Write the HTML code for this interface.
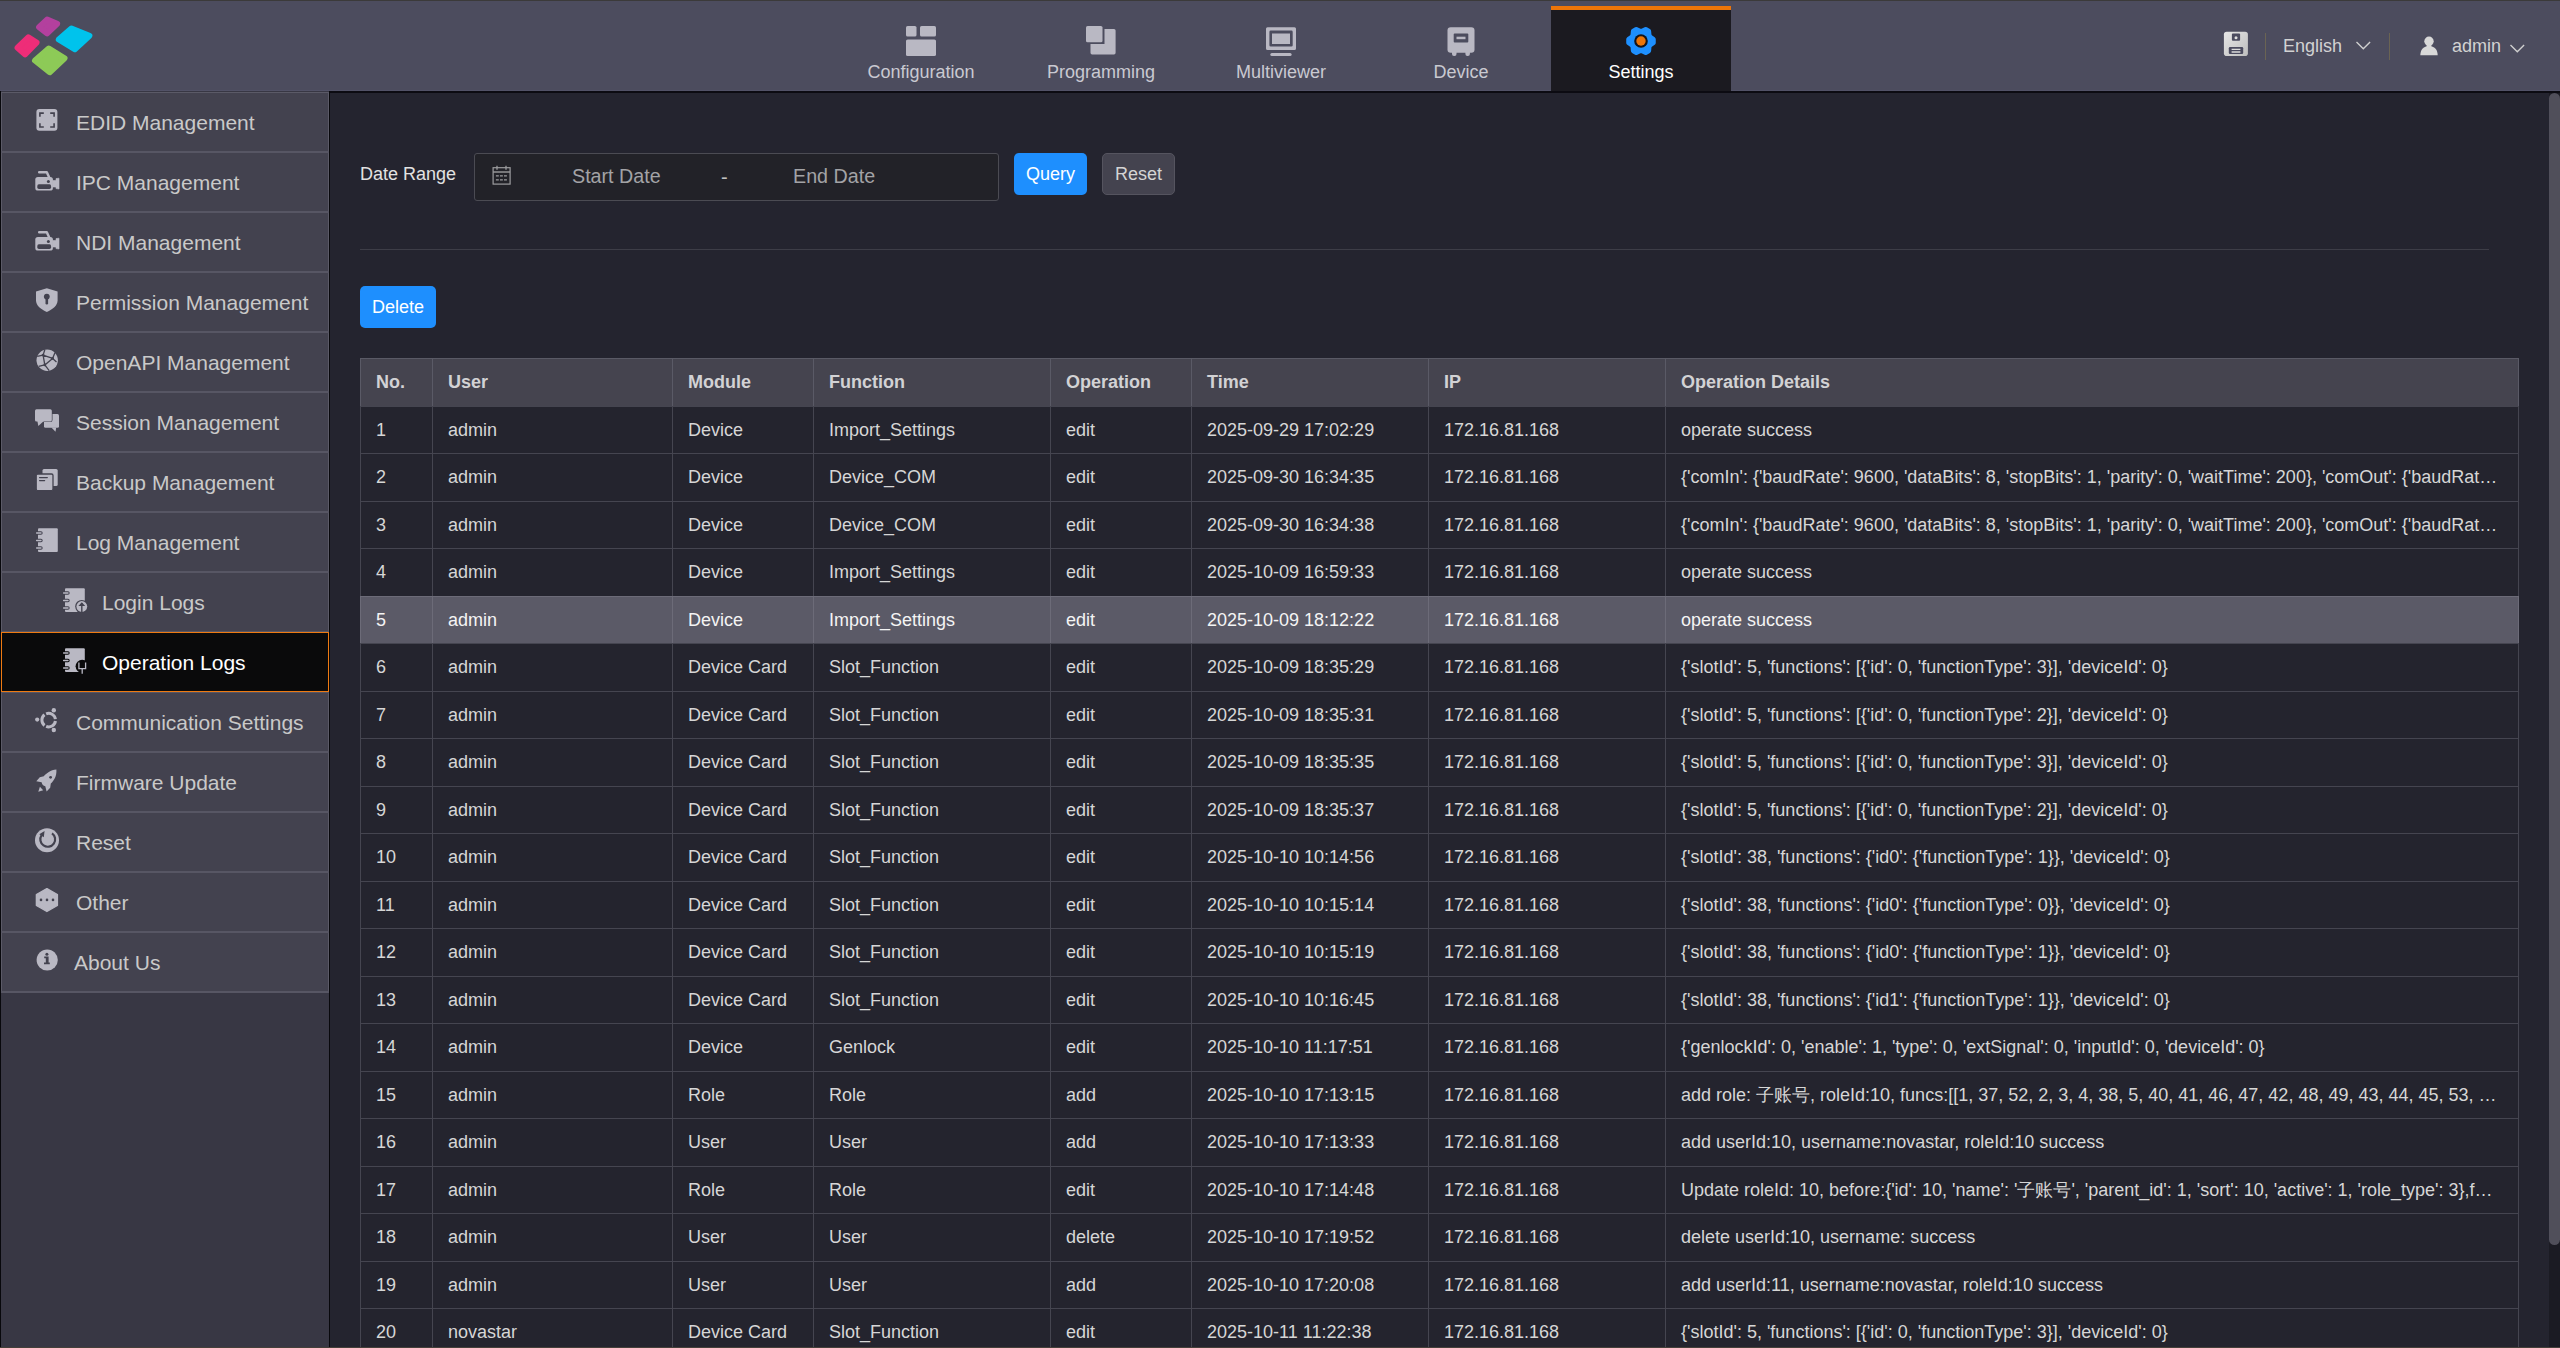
<!DOCTYPE html>
<html><head><meta charset="utf-8"><style>
*{box-sizing:border-box}
html,body{margin:0;padding:0}
body{width:2560px;height:1348px;overflow:hidden;position:relative;background:#24242f;font-family:'Liberation Sans', sans-serif;}
.abs{position:absolute}
#hdr{position:absolute;left:0;top:0;width:2560px;height:91px;background:#4c4c5e;border-top:1px solid #3b3a3a}
#hdrline{position:absolute;left:0;top:90px;width:2560px;height:1px;background:#525267}
#hdrblk{position:absolute;left:0;top:91px;width:2560px;height:2px;background:#0c0b12}
.tab{position:absolute;top:0;width:180px;height:91px;text-align:center;color:#c9c9d1;font-size:18px}
.tab .lbl{position:absolute;left:0;width:180px;top:62px;line-height:21px}
.tab svg{position:absolute;left:75px;top:24px}
#side{position:absolute;left:0;top:91px;width:330px;height:1257px;background:#383744;border-left:1px solid #08080c;border-right:1px solid #08080c}
.it{position:absolute;left:1px;width:328px;height:61px;color:#c9c9c9;font-size:21px}
.it .t{position:absolute;left:75px;top:19px;line-height:24px;white-space:nowrap}
.it svg{position:absolute}
.it.sub .t{left:101px}
.it.sel{color:#ffffff}
.cell{position:absolute;top:0;height:100%;border-left:1px solid #454550;padding-left:15px;white-space:nowrap;overflow:hidden;text-overflow:ellipsis;font-size:18px;color:#d6d6d6}
.row{position:absolute;left:0;width:2159px;border-top:1px solid #454550}
</style></head><body>

<div id="hdr"></div><div id="hdrline"></div><div id="hdrblk"></div>
<svg class="abs" style="left:0;top:8px" width="110" height="80" viewBox="0 8 110 80"><polygon points="39.1,27.2 47.1,19.6 57.1,23.8 47.1,33.4" fill="#b3409e" stroke="#b3409e" stroke-width="6" stroke-linejoin="round"/><polygon points="17.6,47.7 28.3,37.4 36.5,42.6 25.0,54.4" fill="#ee2d78" stroke="#ee2d78" stroke-width="6" stroke-linejoin="round"/><polygon points="58.8,39.5 71.4,28.5 89.4,35.7 74.8,49.3" fill="#00c3ec" stroke="#00c3ec" stroke-width="6" stroke-linejoin="round"/><polygon points="35.0,60.5 48.8,48.5 64.5,58.2 49.7,72.2" fill="#8dca57" stroke="#8dca57" stroke-width="6" stroke-linejoin="round"/></svg>
<div class="tab" style="left:831px"><svg width="32" height="34" viewBox="0 0 32 34"><rect x="0" y="2" width="10.5" height="10.5" rx="1.6" fill="#b9b8c3"/><rect x="14" y="2" width="16" height="10.5" rx="1.6" fill="#b9b8c3"/><rect x="0" y="15.5" width="30" height="16.5" rx="1.6" fill="#b9b8c3"/></svg><div class="lbl">Configuration</div></div>
<div class="tab" style="left:1011px"><svg width="32" height="34" viewBox="0 0 32 34"><path d="M4.5 5 h11 a1.5 1.5 0 0 1 1.5 1.5 V20 h-12 a1.5 1.5 0 0 1 -1.5 -1.5 Z" fill="none"/><rect x="0" y="2" width="16.5" height="16.3" rx="1.6" fill="#b9b8c3"/><path d="M18.5 5 h9.5 a1.6 1.6 0 0 1 1.6 1.6 V28.8 a1.6 1.6 0 0 1 -1.6 1.6 H6.1 a1.6 1.6 0 0 1 -1.6 -1.6 V20 h14 Z" fill="#b9b8c3"/></svg><div class="lbl">Programming</div></div>
<div class="tab" style="left:1191px"><svg width="32" height="34" viewBox="0 0 32 34"><path fill-rule="evenodd" d="M1.5 3.2 H28.5 A1.5 1.5 0 0 1 30 4.7 V24.6 A1.5 1.5 0 0 1 28.5 26.1 H1.5 A1.5 1.5 0 0 1 0 24.6 V4.7 A1.5 1.5 0 0 1 1.5 3.2 Z M4.7 6.6 H25.4 A1.3 1.3 0 0 1 26.7 7.9 V21.3 A1.3 1.3 0 0 1 25.4 22.6 H4.7 A1.3 1.3 0 0 1 3.4 21.3 V7.9 A1.3 1.3 0 0 1 4.7 6.6 Z" fill="#b9b8c3"/><rect x="6" y="9.5" width="18" height="10.5" fill="#b9b8c3"/><rect x="4.3" y="29" width="21.3" height="3.1" rx="1.5" fill="#b9b8c3"/></svg><div class="lbl">Multiviewer</div></div>
<div class="tab" style="left:1371px"><svg width="32" height="34" viewBox="0 0 32 34"><rect x="1.5" y="3.3" width="27" height="25.4" rx="3.2" fill="#b9b8c3"/><rect x="7.7" y="9.4" width="14.6" height="9" rx="1" fill="#4c4c5e"/><rect x="10.5" y="12.7" width="9" height="2.5" fill="#b9b8c3"/><rect x="6" y="26" width="4.5" height="6" rx="2" fill="#b9b8c3"/><rect x="19.4" y="26" width="4.5" height="6" rx="2" fill="#b9b8c3"/></svg><div class="lbl">Device</div></div>
<div class="tab" style="left:1551px;top:6px;height:85px;background:#1b1a20;border-top:4px solid #ec7508"></div>
<svg class="abs" style="left:1621px;top:21px" width="40" height="40" viewBox="0 0 40 40"><polygon points="32.28,18.27 32.28,21.73 29.04,24.03 28.01,25.82 27.63,29.77 24.65,31.50 21.03,29.85 18.97,29.85 15.35,31.50 12.37,29.77 11.99,25.82 10.96,24.03 7.72,21.73 7.72,18.27 10.96,15.97 11.99,14.18 12.37,10.23 15.35,8.50 18.97,10.15 21.03,10.15 24.65,8.50 27.63,10.23 28.01,14.18 29.04,15.97" fill="#1e90ff" stroke="#1e90ff" stroke-width="5" stroke-linejoin="round"/><circle cx="20" cy="20" r="6.8" fill="#15151a"/><circle cx="20" cy="20" r="4.7" fill="#ec7508"/></svg>
<div class="abs" style="left:1551px;top:62px;width:180px;text-align:center;color:#ffffff;font-size:18px;line-height:21px">Settings</div>
<svg class="abs" style="left:2223px;top:31px" width="26" height="26" viewBox="0 0 26 26"><defs><linearGradient id="fg" x1="0" y1="0" x2="1" y2="1"><stop offset="0" stop-color="#e6e6e6"/><stop offset="1" stop-color="#bebebe"/></linearGradient></defs><rect x="0.9" y="0.8" width="24" height="24.2" rx="2.8" fill="url(#fg)"/><rect x="8.9" y="2.5" width="8.2" height="7.3" rx="1" fill="#4b4b5f"/><circle cx="13" cy="6.8" r="1.5" fill="#e0e0e0"/><rect x="5.8" y="16" width="14.4" height="7" rx="1.2" fill="#4b4b5f"/><path d="M8.6 18.3 H17.4 M8.6 21 H17.4" stroke="#dcdcdc" stroke-width="1.3"/></svg>
<div class="abs" style="left:2265px;top:33px;width:1px;height:27px;background:#6a6453"></div>
<div class="abs" style="left:2389px;top:33px;width:1px;height:27px;background:#6a6453"></div>
<div class="abs" style="left:2283px;top:36px;color:#d2d2d2;font-size:18px;line-height:21px">English</div>
<svg class="abs" style="left:2355px;top:40px" width="17" height="11" viewBox="0 0 17 11"><path d="M1.5 2 L8.3 8.8 L15.1 2" fill="none" stroke="#cfcfcf" stroke-width="1.4"/></svg>
<svg class="abs" style="left:2419px;top:36px" width="20" height="22" viewBox="0 0 20 22"><circle cx="10" cy="5.2" r="4.7" fill="#d8d8d8"/><rect x="7.6" y="8" width="4.8" height="3" fill="#d8d8d8"/><path d="M1.3 19.2 C1.5 13.5 4.5 10 10 10 C15.5 10 18.5 13.5 18.7 19.2 Z" fill="#d8d8d8"/></svg>
<div class="abs" style="left:2452px;top:36px;color:#d2d2d2;font-size:18px;line-height:21px">admin</div>
<svg class="abs" style="left:2509px;top:43px" width="17" height="11" viewBox="0 0 17 11"><path d="M1.5 2 L8.3 8.8 L15.1 2" fill="none" stroke="#cfcfcf" stroke-width="1.4"/></svg>
<div id="side"></div>
<div class="abs" style="left:1px;top:92px;width:328px;height:901px;background:#43424f;border-left:1px solid #5b5a67;border-right:1px solid #5b5a67"></div>
<div class="abs" style="left:1px;top:92px;width:328px;height:1px;background:#5b5a67"></div>
<div class="abs" style="left:1px;top:151px;width:328px;height:2px;background:#575664"></div>
<div class="abs" style="left:1px;top:211px;width:328px;height:2px;background:#575664"></div>
<div class="abs" style="left:1px;top:271px;width:328px;height:2px;background:#575664"></div>
<div class="abs" style="left:1px;top:331px;width:328px;height:2px;background:#575664"></div>
<div class="abs" style="left:1px;top:391px;width:328px;height:2px;background:#575664"></div>
<div class="abs" style="left:1px;top:451px;width:328px;height:2px;background:#575664"></div>
<div class="abs" style="left:1px;top:511px;width:328px;height:2px;background:#575664"></div>
<div class="abs" style="left:1px;top:571px;width:328px;height:2px;background:#575664"></div>
<div class="abs" style="left:1px;top:631px;width:328px;height:2px;background:#575664"></div>
<div class="abs" style="left:1px;top:691px;width:328px;height:2px;background:#575664"></div>
<div class="abs" style="left:1px;top:751px;width:328px;height:2px;background:#575664"></div>
<div class="abs" style="left:1px;top:811px;width:328px;height:2px;background:#575664"></div>
<div class="abs" style="left:1px;top:871px;width:328px;height:2px;background:#575664"></div>
<div class="abs" style="left:1px;top:931px;width:328px;height:2px;background:#575664"></div>
<div class="abs" style="left:1px;top:991px;width:328px;height:2px;background:#575664"></div>
<div class="abs" style="left:1px;top:632px;width:328px;height:60px;background:#0a0a0b;border:1px solid #ee7a12"></div>
<div class="it" style="top:92px"><div class="t">EDID Management</div></div>
<div class="it" style="top:152px"><div class="t">IPC Management</div></div>
<div class="it" style="top:212px"><div class="t">NDI Management</div></div>
<div class="it" style="top:272px"><div class="t">Permission Management</div></div>
<div class="it" style="top:332px"><div class="t">OpenAPI Management</div></div>
<div class="it" style="top:392px"><div class="t">Session Management</div></div>
<div class="it" style="top:452px"><div class="t">Backup Management</div></div>
<div class="it" style="top:512px"><div class="t">Log Management</div></div>
<div class="it sub" style="top:572px"><div class="t">Login Logs</div></div>
<div class="it sub sel" style="top:632px"><div class="t">Operation Logs</div></div>
<div class="it" style="top:692px"><div class="t">Communication Settings</div></div>
<div class="it" style="top:752px"><div class="t">Firmware Update</div></div>
<div class="it" style="top:812px"><div class="t">Reset</div></div>
<div class="it" style="top:872px"><div class="t">Other</div></div>
<div class="it" style="top:932px"><div class="t" style="left:73px">About Us</div></div>
<svg class="abs" style="left:35px;top:108px" width="26" height="26" viewBox="0 0 26 26"><rect x="1.4" y="1" width="21" height="21.8" rx="3" fill="#b9b8c3"/><path d="M4.9 8.7V5.1H8.8 M15.2 5.1H19.1V8.7 M4.9 15.3V19H8.8 M15.2 19H19.1V15.3" fill="none" stroke="#43424f" stroke-width="1.6"/></svg>
<svg class="abs" style="left:35px;top:168px" width="26" height="26" viewBox="0 0 26 26"><path d="M4.2 4.3 H11.8 L14 9" fill="none" stroke="#b9b8c3" stroke-width="2.5" stroke-linejoin="round" stroke-linecap="round"/><rect x="0.3" y="9" width="17.6" height="13.6" rx="2.6" fill="#b9b8c3"/><rect x="2.3" y="16.3" width="13.8" height="4.6" rx="1.6" fill="#43424f"/><circle cx="13.4" cy="13.4" r="1.5" fill="#43424f"/><path d="M17.5 12.5 H21 V10.6 L24 10.2 V21 L21 20.6 V19 H17.5 Z" fill="#b9b8c3" stroke="#b9b8c3" stroke-width="0.6" stroke-linejoin="round"/></svg>
<svg class="abs" style="left:35px;top:228px" width="26" height="26" viewBox="0 0 26 26"><path d="M4.2 4.3 H11.8 L14 9" fill="none" stroke="#b9b8c3" stroke-width="2.5" stroke-linejoin="round" stroke-linecap="round"/><rect x="0.3" y="9" width="17.6" height="13.6" rx="2.6" fill="#b9b8c3"/><rect x="2.3" y="16.3" width="13.8" height="4.6" rx="1.6" fill="#43424f"/><circle cx="13.4" cy="13.4" r="1.5" fill="#43424f"/><path d="M17.5 12.5 H21 V10.6 L24 10.2 V21 L21 20.6 V19 H17.5 Z" fill="#b9b8c3" stroke="#b9b8c3" stroke-width="0.6" stroke-linejoin="round"/></svg>
<svg class="abs" style="left:35px;top:288px" width="26" height="26" viewBox="0 0 26 26"><path d="M11.8 0.3 L22.6 3.5 V12.5 C22.6 17.5 17.5 21.5 11.8 24 C6 21.5 1 17.5 1 12.5 V3.5 Z" fill="#b9b8c3"/><circle cx="11.8" cy="8.6" r="2.9" fill="#43424f"/><rect x="10.5" y="9" width="2.6" height="7.4" rx="1.2" fill="#43424f"/></svg>
<svg class="abs" style="left:35px;top:348px" width="26" height="26" viewBox="0 0 26 26"><circle cx="12.2" cy="12.2" r="10.7" fill="#b9b8c3"/><path d="M9.8 1.8 L8.1 7.1 L2.2 8.3 M8.1 7.1 L17.6 10.4 L19.9 4.8 M17.6 10.4 L21.5 14 M17.6 10.4 L9.8 16.9 L8.1 7.1 M9.8 16.9 L3.6 18.3 M9.8 16.9 L14.2 22.6" fill="none" stroke="#43424f" stroke-width="1.3" stroke-linejoin="round"/><circle cx="8.1" cy="7.1" r="1.4" fill="#43424f"/><circle cx="17.6" cy="10.4" r="1.4" fill="#43424f"/><circle cx="9.8" cy="16.9" r="1.4" fill="#43424f"/></svg>
<svg class="abs" style="left:35px;top:408px" width="26" height="26" viewBox="0 0 26 26"><rect x="9" y="6" width="15" height="13.7" rx="1.5" fill="#b9b8c3"/><path d="M16.4 19.5 L20.5 23.8 L21.2 19.5 Z" fill="#b9b8c3"/><rect x="0" y="1.2" width="16.8" height="12.2" rx="1.5" fill="#b9b8c3" stroke="#43424f" stroke-width="1.4"/><rect x="0" y="1.2" width="16.8" height="12.2" rx="1.5" fill="#b9b8c3"/><path d="M2.4 13 L3.3 17.9 L8.9 13 Z" fill="#b9b8c3"/></svg>
<svg class="abs" style="left:35px;top:468px" width="26" height="26" viewBox="0 0 26 26"><rect x="7.5" y="1" width="15.2" height="17" rx="1.5" fill="#b9b8c3"/><rect x="1.2" y="6" width="16.8" height="16.6" rx="1.5" fill="#b9b8c3" stroke="#43424f" stroke-width="1.3"/><path d="M4.6 9.6 H12.3 M4.6 12.6 H9.6" stroke="#43424f" stroke-width="1.3" stroke-linecap="round"/></svg>
<svg class="abs" style="left:35px;top:528px" width="26" height="26" viewBox="0 0 26 26"><rect x="3" y="0.2" width="19.8" height="23.8" rx="1" fill="#b9b8c3"/><path d="M1.6 5 H6 M1.6 12.5 H6 M1.6 20 H6" stroke="#43424f" stroke-width="3.4" stroke-linecap="round"/><path d="M1.6 5 H6 M1.6 12.5 H6 M1.6 20 H6" stroke="#b9b8c3" stroke-width="1.3" stroke-linecap="round"/></svg>
<svg class="abs" style="left:62px;top:588px" width="26" height="26" viewBox="0 0 26 26"><rect x="3" y="0.2" width="19.8" height="23.8" rx="1" fill="#b9b8c3"/><path d="M1.6 5 H6 M1.6 12.5 H6 M1.6 20 H6" stroke="#43424f" stroke-width="3.4" stroke-linecap="round"/><path d="M1.6 5 H6 M1.6 12.5 H6 M1.6 20 H6" stroke="#b9b8c3" stroke-width="1.3" stroke-linecap="round"/><circle cx="19.8" cy="18.5" r="6.6" fill="#43424f"/><circle cx="19.8" cy="18.5" r="5.4" fill="#b9b8c3"/><path d="M19.8 24 V15" stroke="#43424f" stroke-width="1.4"/><path d="M16.4 18 L19.8 14.2 L23.2 18 Z" fill="#43424f"/></svg>
<svg class="abs" style="left:62px;top:648px" width="26" height="26" viewBox="0 0 26 26"><rect x="3" y="0.2" width="19.8" height="23.8" rx="1" fill="#b9b8c3"/><path d="M1.6 5 H6 M1.6 12.5 H6 M1.6 20 H6" stroke="#0a0a0b" stroke-width="3.4" stroke-linecap="round"/><path d="M1.6 5 H6 M1.6 12.5 H6 M1.6 20 H6" stroke="#b9b8c3" stroke-width="1.3" stroke-linecap="round"/><circle cx="20.2" cy="18.3" r="6.6" fill="#0a0a0b"/><path d="M16.9 14.6 V20.6 H23.6 V14.6 M20.2 20.6 V25.8" fill="none" stroke="#b9b8c3" stroke-width="1.3"/></svg>
<svg class="abs" style="left:35px;top:708px" width="26" height="26" viewBox="0 0 26 26"><path d="M11.15 5.80 A6.8 6.8 0 0 1 20.43 11.15 M20.43 13.05 A6.8 6.8 0 0 1 11.15 18.40 M9.51 17.46 A6.8 6.8 0 0 1 9.51 6.74 " fill="none" stroke="#b9b8c3" stroke-width="3"/><circle cx="2.2" cy="11.6" r="2.1" fill="#b9b8c3"/><circle cx="18.8" cy="2.2" r="2.2" fill="#b9b8c3"/><circle cx="18.8" cy="22" r="2.2" fill="#b9b8c3"/></svg>
<svg class="abs" style="left:35px;top:768px" width="26" height="26" viewBox="0 0 26 26"><path d="M21.4 1.4 C15.5 2 11.5 5 8.8 8.2 L4.8 9.2 L1.3 13.3 L6.6 14.2 C7 16.5 8.3 17.8 10.3 18.3 L11.6 23.6 L15.2 19.8 L15.8 15.5 C19 12.5 21.8 8.2 21.4 1.4 Z" fill="#b9b8c3"/><circle cx="15.6" cy="9.3" r="1.4" fill="#43424f"/><path d="M3.3 23.8 L8.2 22.2 L4.9 18.7 Z" fill="#b9b8c3"/></svg>
<svg class="abs" style="left:35px;top:828px" width="26" height="26" viewBox="0 0 26 26"><circle cx="12" cy="12.2" r="12" fill="#b9b8c3"/><path d="M17 5.3 A7.4 7.4 0 1 1 6.6 7.2" fill="none" stroke="#43424f" stroke-width="2.2"/><path d="M4.3 6.3 L9.6 2.9 L8.8 9.2 Z" fill="#43424f"/></svg>
<svg class="abs" style="left:35px;top:888px" width="26" height="26" viewBox="0 0 26 26"><path d="M11.9 0.6 L22.4 6.5 V17.5 L11.9 23.5 L1.4 17.5 V6.5 Z" fill="#b9b8c3" stroke="#b9b8c3" stroke-width="1.4" stroke-linejoin="round"/><circle cx="6" cy="11.9" r="1.3" fill="#43424f"/><circle cx="12" cy="11.9" r="1.3" fill="#43424f"/><circle cx="18" cy="11.9" r="1.3" fill="#43424f"/></svg>
<svg class="abs" style="left:35px;top:948px" width="26" height="26" viewBox="0 0 26 26"><circle cx="12.2" cy="12" r="10.6" fill="#b9b8c3"/><circle cx="11.9" cy="6.2" r="1.5" fill="#43424f"/><path d="M9.2 9.4 H12.8 V15.2 M9 15.4 H14.8" fill="none" stroke="#43424f" stroke-width="1.6"/><rect x="10.8" y="9" width="2" height="6.5" fill="#43424f"/></svg>
<div class="abs" style="left:360px;top:164px;color:#e2e2e2;font-size:18px;line-height:21px">Date Range</div>
<div class="abs" style="left:474px;top:153px;width:525px;height:48px;border:1px solid #4b4b53;border-radius:3px;background:#222228"></div>
<svg class="abs" style="left:491px;top:165px" width="21" height="21" viewBox="0 0 21 21"><rect x="2.1" y="2.7" width="17" height="16.4" fill="none" stroke="#9c9c9e" stroke-width="1.2"/><path d="M2.1 7 H19.1" stroke="#9c9c9e" stroke-width="1.4"/><path d="M6 0.8 V4.8 M15 0.8 V4.8" stroke="#9c9c9e" stroke-width="1.3"/><path d="M4.9 10.8 h2.9 M8.95 10.8 h2.9 M13 10.8 h2.9 M4.9 14.8 h2.9 M8.95 14.8 h2.9 M13 14.8 h2.9" stroke="#9c9c9e" stroke-width="1.3"/></svg>
<div class="abs" style="left:572px;top:165px;color:#a3a3a6;font-size:19.7px;line-height:23px">Start Date</div>
<div class="abs" style="left:721px;top:166px;color:#c0c0c0;font-size:20px;line-height:23px">-</div>
<div class="abs" style="left:793px;top:165px;color:#a3a3a6;font-size:19.7px;line-height:23px">End Date</div>
<div class="abs" style="left:1014px;top:153px;width:73px;height:42px;border-radius:5px;background:#1e8ffe;color:#fff;font-size:18px;line-height:42px;text-align:center">Query</div>
<div class="abs" style="left:1102px;top:153px;width:73px;height:42px;border-radius:5px;background:#44434f;border:1px solid #55545f;color:#d4d4d4;font-size:18px;line-height:40px;text-align:center">Reset</div>
<div class="abs" style="left:360px;top:249px;width:2129px;height:1px;background:#3d3d47"></div>
<div class="abs" style="left:360px;top:286px;width:76px;height:42px;border-radius:5px;background:#1e8ffe;color:#fff;font-size:18px;line-height:42px;text-align:center">Delete</div>
<div class="abs" style="left:360px;top:358px;width:2159px;height:990px;overflow:hidden">
<div class="row" style="top:0.0px;height:48.5px;background:#45444f;border-top-color:#5a5a66"><div class="cell" style="left:0px;width:72px;line-height:47.5px;color:#d2d2d4;border-left-color:#5a5a66;font-weight:bold">No.</div><div class="cell" style="left:72px;width:240px;line-height:47.5px;color:#d2d2d4;border-left-color:#5a5a66;font-weight:bold">User</div><div class="cell" style="left:312px;width:141px;line-height:47.5px;color:#d2d2d4;border-left-color:#5a5a66;font-weight:bold">Module</div><div class="cell" style="left:453px;width:237px;line-height:47.5px;color:#d2d2d4;border-left-color:#5a5a66;font-weight:bold">Function</div><div class="cell" style="left:690px;width:141px;line-height:47.5px;color:#d2d2d4;border-left-color:#5a5a66;font-weight:bold">Operation</div><div class="cell" style="left:831px;width:237px;line-height:47.5px;color:#d2d2d4;border-left-color:#5a5a66;font-weight:bold">Time</div><div class="cell" style="left:1068px;width:237px;line-height:47.5px;color:#d2d2d4;border-left-color:#5a5a66;font-weight:bold">IP</div><div class="cell" style="left:1305px;width:854px;line-height:47.5px;color:#d2d2d4;border-left-color:#5a5a66;font-weight:bold;border-right:1px solid #5a5a66;padding-right:20px">Operation Details</div></div>
<div class="row" style="top:47.5px;height:48.5px;background:#24242e;border-top-color:#454550"><div class="cell" style="left:0px;width:72px;line-height:47.5px;color:#d6d6d6;border-left-color:#454550">1</div><div class="cell" style="left:72px;width:240px;line-height:47.5px;color:#d6d6d6;border-left-color:#454550">admin</div><div class="cell" style="left:312px;width:141px;line-height:47.5px;color:#d6d6d6;border-left-color:#454550">Device</div><div class="cell" style="left:453px;width:237px;line-height:47.5px;color:#d6d6d6;border-left-color:#454550">Import_Settings</div><div class="cell" style="left:690px;width:141px;line-height:47.5px;color:#d6d6d6;border-left-color:#454550">edit</div><div class="cell" style="left:831px;width:237px;line-height:47.5px;color:#d6d6d6;border-left-color:#454550">2025-09-29 17:02:29</div><div class="cell" style="left:1068px;width:237px;line-height:47.5px;color:#d6d6d6;border-left-color:#454550">172.16.81.168</div><div class="cell" style="left:1305px;width:854px;line-height:47.5px;color:#d6d6d6;border-left-color:#454550;border-right:1px solid #454550;padding-right:20px">operate success</div></div>
<div class="row" style="top:95.0px;height:48.5px;background:#24242e;border-top-color:#454550"><div class="cell" style="left:0px;width:72px;line-height:47.5px;color:#d6d6d6;border-left-color:#454550">2</div><div class="cell" style="left:72px;width:240px;line-height:47.5px;color:#d6d6d6;border-left-color:#454550">admin</div><div class="cell" style="left:312px;width:141px;line-height:47.5px;color:#d6d6d6;border-left-color:#454550">Device</div><div class="cell" style="left:453px;width:237px;line-height:47.5px;color:#d6d6d6;border-left-color:#454550">Device_COM</div><div class="cell" style="left:690px;width:141px;line-height:47.5px;color:#d6d6d6;border-left-color:#454550">edit</div><div class="cell" style="left:831px;width:237px;line-height:47.5px;color:#d6d6d6;border-left-color:#454550">2025-09-30 16:34:35</div><div class="cell" style="left:1068px;width:237px;line-height:47.5px;color:#d6d6d6;border-left-color:#454550">172.16.81.168</div><div class="cell" style="left:1305px;width:854px;line-height:47.5px;color:#d6d6d6;border-left-color:#454550;border-right:1px solid #454550;padding-right:20px">{&#x27;comIn&#x27;: {&#x27;baudRate&#x27;: 9600, &#x27;dataBits&#x27;: 8, &#x27;stopBits&#x27;: 1, &#x27;parity&#x27;: 0, &#x27;waitTime&#x27;: 200}, &#x27;comOut&#x27;: {&#x27;baudRate&#x27;: 9600, &#x27;dataBits&#x27;: 8, &#x27;stopBits&#x27;: 1, &#x27;parity&#x27;: 0, &#x27;waitTime&#x27;: 200}}</div></div>
<div class="row" style="top:142.5px;height:48.5px;background:#24242e;border-top-color:#454550"><div class="cell" style="left:0px;width:72px;line-height:47.5px;color:#d6d6d6;border-left-color:#454550">3</div><div class="cell" style="left:72px;width:240px;line-height:47.5px;color:#d6d6d6;border-left-color:#454550">admin</div><div class="cell" style="left:312px;width:141px;line-height:47.5px;color:#d6d6d6;border-left-color:#454550">Device</div><div class="cell" style="left:453px;width:237px;line-height:47.5px;color:#d6d6d6;border-left-color:#454550">Device_COM</div><div class="cell" style="left:690px;width:141px;line-height:47.5px;color:#d6d6d6;border-left-color:#454550">edit</div><div class="cell" style="left:831px;width:237px;line-height:47.5px;color:#d6d6d6;border-left-color:#454550">2025-09-30 16:34:38</div><div class="cell" style="left:1068px;width:237px;line-height:47.5px;color:#d6d6d6;border-left-color:#454550">172.16.81.168</div><div class="cell" style="left:1305px;width:854px;line-height:47.5px;color:#d6d6d6;border-left-color:#454550;border-right:1px solid #454550;padding-right:20px">{&#x27;comIn&#x27;: {&#x27;baudRate&#x27;: 9600, &#x27;dataBits&#x27;: 8, &#x27;stopBits&#x27;: 1, &#x27;parity&#x27;: 0, &#x27;waitTime&#x27;: 200}, &#x27;comOut&#x27;: {&#x27;baudRate&#x27;: 9600, &#x27;dataBits&#x27;: 8, &#x27;stopBits&#x27;: 1, &#x27;parity&#x27;: 0, &#x27;waitTime&#x27;: 200}}</div></div>
<div class="row" style="top:190.0px;height:48.5px;background:#24242e;border-top-color:#454550"><div class="cell" style="left:0px;width:72px;line-height:47.5px;color:#d6d6d6;border-left-color:#454550">4</div><div class="cell" style="left:72px;width:240px;line-height:47.5px;color:#d6d6d6;border-left-color:#454550">admin</div><div class="cell" style="left:312px;width:141px;line-height:47.5px;color:#d6d6d6;border-left-color:#454550">Device</div><div class="cell" style="left:453px;width:237px;line-height:47.5px;color:#d6d6d6;border-left-color:#454550">Import_Settings</div><div class="cell" style="left:690px;width:141px;line-height:47.5px;color:#d6d6d6;border-left-color:#454550">edit</div><div class="cell" style="left:831px;width:237px;line-height:47.5px;color:#d6d6d6;border-left-color:#454550">2025-10-09 16:59:33</div><div class="cell" style="left:1068px;width:237px;line-height:47.5px;color:#d6d6d6;border-left-color:#454550">172.16.81.168</div><div class="cell" style="left:1305px;width:854px;line-height:47.5px;color:#d6d6d6;border-left-color:#454550;border-right:1px solid #454550;padding-right:20px">operate success</div></div>
<div class="row" style="top:237.5px;height:48.5px;background:#5b5a67;border-top-color:#6c6b78"><div class="cell" style="left:0px;width:72px;line-height:47.5px;color:#f4f4f4;border-left-color:#6c6b78">5</div><div class="cell" style="left:72px;width:240px;line-height:47.5px;color:#f4f4f4;border-left-color:#6c6b78">admin</div><div class="cell" style="left:312px;width:141px;line-height:47.5px;color:#f4f4f4;border-left-color:#6c6b78">Device</div><div class="cell" style="left:453px;width:237px;line-height:47.5px;color:#f4f4f4;border-left-color:#6c6b78">Import_Settings</div><div class="cell" style="left:690px;width:141px;line-height:47.5px;color:#f4f4f4;border-left-color:#6c6b78">edit</div><div class="cell" style="left:831px;width:237px;line-height:47.5px;color:#f4f4f4;border-left-color:#6c6b78">2025-10-09 18:12:22</div><div class="cell" style="left:1068px;width:237px;line-height:47.5px;color:#f4f4f4;border-left-color:#6c6b78">172.16.81.168</div><div class="cell" style="left:1305px;width:854px;line-height:47.5px;color:#f4f4f4;border-left-color:#6c6b78;border-right:1px solid #6c6b78;padding-right:20px">operate success</div></div>
<div class="row" style="top:285.0px;height:48.5px;background:#24242e;border-top-color:#454550"><div class="cell" style="left:0px;width:72px;line-height:47.5px;color:#d6d6d6;border-left-color:#454550">6</div><div class="cell" style="left:72px;width:240px;line-height:47.5px;color:#d6d6d6;border-left-color:#454550">admin</div><div class="cell" style="left:312px;width:141px;line-height:47.5px;color:#d6d6d6;border-left-color:#454550">Device Card</div><div class="cell" style="left:453px;width:237px;line-height:47.5px;color:#d6d6d6;border-left-color:#454550">Slot_Function</div><div class="cell" style="left:690px;width:141px;line-height:47.5px;color:#d6d6d6;border-left-color:#454550">edit</div><div class="cell" style="left:831px;width:237px;line-height:47.5px;color:#d6d6d6;border-left-color:#454550">2025-10-09 18:35:29</div><div class="cell" style="left:1068px;width:237px;line-height:47.5px;color:#d6d6d6;border-left-color:#454550">172.16.81.168</div><div class="cell" style="left:1305px;width:854px;line-height:47.5px;color:#d6d6d6;border-left-color:#454550;border-right:1px solid #454550;padding-right:20px">{&#x27;slotId&#x27;: 5, &#x27;functions&#x27;: [{&#x27;id&#x27;: 0, &#x27;functionType&#x27;: 3}], &#x27;deviceId&#x27;: 0}</div></div>
<div class="row" style="top:332.5px;height:48.5px;background:#24242e;border-top-color:#454550"><div class="cell" style="left:0px;width:72px;line-height:47.5px;color:#d6d6d6;border-left-color:#454550">7</div><div class="cell" style="left:72px;width:240px;line-height:47.5px;color:#d6d6d6;border-left-color:#454550">admin</div><div class="cell" style="left:312px;width:141px;line-height:47.5px;color:#d6d6d6;border-left-color:#454550">Device Card</div><div class="cell" style="left:453px;width:237px;line-height:47.5px;color:#d6d6d6;border-left-color:#454550">Slot_Function</div><div class="cell" style="left:690px;width:141px;line-height:47.5px;color:#d6d6d6;border-left-color:#454550">edit</div><div class="cell" style="left:831px;width:237px;line-height:47.5px;color:#d6d6d6;border-left-color:#454550">2025-10-09 18:35:31</div><div class="cell" style="left:1068px;width:237px;line-height:47.5px;color:#d6d6d6;border-left-color:#454550">172.16.81.168</div><div class="cell" style="left:1305px;width:854px;line-height:47.5px;color:#d6d6d6;border-left-color:#454550;border-right:1px solid #454550;padding-right:20px">{&#x27;slotId&#x27;: 5, &#x27;functions&#x27;: [{&#x27;id&#x27;: 0, &#x27;functionType&#x27;: 2}], &#x27;deviceId&#x27;: 0}</div></div>
<div class="row" style="top:380.0px;height:48.5px;background:#24242e;border-top-color:#454550"><div class="cell" style="left:0px;width:72px;line-height:47.5px;color:#d6d6d6;border-left-color:#454550">8</div><div class="cell" style="left:72px;width:240px;line-height:47.5px;color:#d6d6d6;border-left-color:#454550">admin</div><div class="cell" style="left:312px;width:141px;line-height:47.5px;color:#d6d6d6;border-left-color:#454550">Device Card</div><div class="cell" style="left:453px;width:237px;line-height:47.5px;color:#d6d6d6;border-left-color:#454550">Slot_Function</div><div class="cell" style="left:690px;width:141px;line-height:47.5px;color:#d6d6d6;border-left-color:#454550">edit</div><div class="cell" style="left:831px;width:237px;line-height:47.5px;color:#d6d6d6;border-left-color:#454550">2025-10-09 18:35:35</div><div class="cell" style="left:1068px;width:237px;line-height:47.5px;color:#d6d6d6;border-left-color:#454550">172.16.81.168</div><div class="cell" style="left:1305px;width:854px;line-height:47.5px;color:#d6d6d6;border-left-color:#454550;border-right:1px solid #454550;padding-right:20px">{&#x27;slotId&#x27;: 5, &#x27;functions&#x27;: [{&#x27;id&#x27;: 0, &#x27;functionType&#x27;: 3}], &#x27;deviceId&#x27;: 0}</div></div>
<div class="row" style="top:427.5px;height:48.5px;background:#24242e;border-top-color:#454550"><div class="cell" style="left:0px;width:72px;line-height:47.5px;color:#d6d6d6;border-left-color:#454550">9</div><div class="cell" style="left:72px;width:240px;line-height:47.5px;color:#d6d6d6;border-left-color:#454550">admin</div><div class="cell" style="left:312px;width:141px;line-height:47.5px;color:#d6d6d6;border-left-color:#454550">Device Card</div><div class="cell" style="left:453px;width:237px;line-height:47.5px;color:#d6d6d6;border-left-color:#454550">Slot_Function</div><div class="cell" style="left:690px;width:141px;line-height:47.5px;color:#d6d6d6;border-left-color:#454550">edit</div><div class="cell" style="left:831px;width:237px;line-height:47.5px;color:#d6d6d6;border-left-color:#454550">2025-10-09 18:35:37</div><div class="cell" style="left:1068px;width:237px;line-height:47.5px;color:#d6d6d6;border-left-color:#454550">172.16.81.168</div><div class="cell" style="left:1305px;width:854px;line-height:47.5px;color:#d6d6d6;border-left-color:#454550;border-right:1px solid #454550;padding-right:20px">{&#x27;slotId&#x27;: 5, &#x27;functions&#x27;: [{&#x27;id&#x27;: 0, &#x27;functionType&#x27;: 2}], &#x27;deviceId&#x27;: 0}</div></div>
<div class="row" style="top:475.0px;height:48.5px;background:#24242e;border-top-color:#454550"><div class="cell" style="left:0px;width:72px;line-height:47.5px;color:#d6d6d6;border-left-color:#454550">10</div><div class="cell" style="left:72px;width:240px;line-height:47.5px;color:#d6d6d6;border-left-color:#454550">admin</div><div class="cell" style="left:312px;width:141px;line-height:47.5px;color:#d6d6d6;border-left-color:#454550">Device Card</div><div class="cell" style="left:453px;width:237px;line-height:47.5px;color:#d6d6d6;border-left-color:#454550">Slot_Function</div><div class="cell" style="left:690px;width:141px;line-height:47.5px;color:#d6d6d6;border-left-color:#454550">edit</div><div class="cell" style="left:831px;width:237px;line-height:47.5px;color:#d6d6d6;border-left-color:#454550">2025-10-10 10:14:56</div><div class="cell" style="left:1068px;width:237px;line-height:47.5px;color:#d6d6d6;border-left-color:#454550">172.16.81.168</div><div class="cell" style="left:1305px;width:854px;line-height:47.5px;color:#d6d6d6;border-left-color:#454550;border-right:1px solid #454550;padding-right:20px">{&#x27;slotId&#x27;: 38, &#x27;functions&#x27;: {&#x27;id0&#x27;: {&#x27;functionType&#x27;: 1}}, &#x27;deviceId&#x27;: 0}</div></div>
<div class="row" style="top:522.5px;height:48.5px;background:#24242e;border-top-color:#454550"><div class="cell" style="left:0px;width:72px;line-height:47.5px;color:#d6d6d6;border-left-color:#454550">11</div><div class="cell" style="left:72px;width:240px;line-height:47.5px;color:#d6d6d6;border-left-color:#454550">admin</div><div class="cell" style="left:312px;width:141px;line-height:47.5px;color:#d6d6d6;border-left-color:#454550">Device Card</div><div class="cell" style="left:453px;width:237px;line-height:47.5px;color:#d6d6d6;border-left-color:#454550">Slot_Function</div><div class="cell" style="left:690px;width:141px;line-height:47.5px;color:#d6d6d6;border-left-color:#454550">edit</div><div class="cell" style="left:831px;width:237px;line-height:47.5px;color:#d6d6d6;border-left-color:#454550">2025-10-10 10:15:14</div><div class="cell" style="left:1068px;width:237px;line-height:47.5px;color:#d6d6d6;border-left-color:#454550">172.16.81.168</div><div class="cell" style="left:1305px;width:854px;line-height:47.5px;color:#d6d6d6;border-left-color:#454550;border-right:1px solid #454550;padding-right:20px">{&#x27;slotId&#x27;: 38, &#x27;functions&#x27;: {&#x27;id0&#x27;: {&#x27;functionType&#x27;: 0}}, &#x27;deviceId&#x27;: 0}</div></div>
<div class="row" style="top:570.0px;height:48.5px;background:#24242e;border-top-color:#454550"><div class="cell" style="left:0px;width:72px;line-height:47.5px;color:#d6d6d6;border-left-color:#454550">12</div><div class="cell" style="left:72px;width:240px;line-height:47.5px;color:#d6d6d6;border-left-color:#454550">admin</div><div class="cell" style="left:312px;width:141px;line-height:47.5px;color:#d6d6d6;border-left-color:#454550">Device Card</div><div class="cell" style="left:453px;width:237px;line-height:47.5px;color:#d6d6d6;border-left-color:#454550">Slot_Function</div><div class="cell" style="left:690px;width:141px;line-height:47.5px;color:#d6d6d6;border-left-color:#454550">edit</div><div class="cell" style="left:831px;width:237px;line-height:47.5px;color:#d6d6d6;border-left-color:#454550">2025-10-10 10:15:19</div><div class="cell" style="left:1068px;width:237px;line-height:47.5px;color:#d6d6d6;border-left-color:#454550">172.16.81.168</div><div class="cell" style="left:1305px;width:854px;line-height:47.5px;color:#d6d6d6;border-left-color:#454550;border-right:1px solid #454550;padding-right:20px">{&#x27;slotId&#x27;: 38, &#x27;functions&#x27;: {&#x27;id0&#x27;: {&#x27;functionType&#x27;: 1}}, &#x27;deviceId&#x27;: 0}</div></div>
<div class="row" style="top:617.5px;height:48.5px;background:#24242e;border-top-color:#454550"><div class="cell" style="left:0px;width:72px;line-height:47.5px;color:#d6d6d6;border-left-color:#454550">13</div><div class="cell" style="left:72px;width:240px;line-height:47.5px;color:#d6d6d6;border-left-color:#454550">admin</div><div class="cell" style="left:312px;width:141px;line-height:47.5px;color:#d6d6d6;border-left-color:#454550">Device Card</div><div class="cell" style="left:453px;width:237px;line-height:47.5px;color:#d6d6d6;border-left-color:#454550">Slot_Function</div><div class="cell" style="left:690px;width:141px;line-height:47.5px;color:#d6d6d6;border-left-color:#454550">edit</div><div class="cell" style="left:831px;width:237px;line-height:47.5px;color:#d6d6d6;border-left-color:#454550">2025-10-10 10:16:45</div><div class="cell" style="left:1068px;width:237px;line-height:47.5px;color:#d6d6d6;border-left-color:#454550">172.16.81.168</div><div class="cell" style="left:1305px;width:854px;line-height:47.5px;color:#d6d6d6;border-left-color:#454550;border-right:1px solid #454550;padding-right:20px">{&#x27;slotId&#x27;: 38, &#x27;functions&#x27;: {&#x27;id1&#x27;: {&#x27;functionType&#x27;: 1}}, &#x27;deviceId&#x27;: 0}</div></div>
<div class="row" style="top:665.0px;height:48.5px;background:#24242e;border-top-color:#454550"><div class="cell" style="left:0px;width:72px;line-height:47.5px;color:#d6d6d6;border-left-color:#454550">14</div><div class="cell" style="left:72px;width:240px;line-height:47.5px;color:#d6d6d6;border-left-color:#454550">admin</div><div class="cell" style="left:312px;width:141px;line-height:47.5px;color:#d6d6d6;border-left-color:#454550">Device</div><div class="cell" style="left:453px;width:237px;line-height:47.5px;color:#d6d6d6;border-left-color:#454550">Genlock</div><div class="cell" style="left:690px;width:141px;line-height:47.5px;color:#d6d6d6;border-left-color:#454550">edit</div><div class="cell" style="left:831px;width:237px;line-height:47.5px;color:#d6d6d6;border-left-color:#454550">2025-10-10 11:17:51</div><div class="cell" style="left:1068px;width:237px;line-height:47.5px;color:#d6d6d6;border-left-color:#454550">172.16.81.168</div><div class="cell" style="left:1305px;width:854px;line-height:47.5px;color:#d6d6d6;border-left-color:#454550;border-right:1px solid #454550;padding-right:20px">{&#x27;genlockId&#x27;: 0, &#x27;enable&#x27;: 1, &#x27;type&#x27;: 0, &#x27;extSignal&#x27;: 0, &#x27;inputId&#x27;: 0, &#x27;deviceId&#x27;: 0}</div></div>
<div class="row" style="top:712.5px;height:48.5px;background:#24242e;border-top-color:#454550"><div class="cell" style="left:0px;width:72px;line-height:47.5px;color:#d6d6d6;border-left-color:#454550">15</div><div class="cell" style="left:72px;width:240px;line-height:47.5px;color:#d6d6d6;border-left-color:#454550">admin</div><div class="cell" style="left:312px;width:141px;line-height:47.5px;color:#d6d6d6;border-left-color:#454550">Role</div><div class="cell" style="left:453px;width:237px;line-height:47.5px;color:#d6d6d6;border-left-color:#454550">Role</div><div class="cell" style="left:690px;width:141px;line-height:47.5px;color:#d6d6d6;border-left-color:#454550">add</div><div class="cell" style="left:831px;width:237px;line-height:47.5px;color:#d6d6d6;border-left-color:#454550">2025-10-10 17:13:15</div><div class="cell" style="left:1068px;width:237px;line-height:47.5px;color:#d6d6d6;border-left-color:#454550">172.16.81.168</div><div class="cell" style="left:1305px;width:854px;line-height:47.5px;color:#d6d6d6;border-left-color:#454550;border-right:1px solid #454550;padding-right:20px">add role: 子账号, roleId:10, funcs:[[1, 37, 52, 2, 3, 4, 38, 5, 40, 41, 46, 47, 42, 48, 49, 43, 44, 45, 53, 54, 55, 56]]</div></div>
<div class="row" style="top:760.0px;height:48.5px;background:#24242e;border-top-color:#454550"><div class="cell" style="left:0px;width:72px;line-height:47.5px;color:#d6d6d6;border-left-color:#454550">16</div><div class="cell" style="left:72px;width:240px;line-height:47.5px;color:#d6d6d6;border-left-color:#454550">admin</div><div class="cell" style="left:312px;width:141px;line-height:47.5px;color:#d6d6d6;border-left-color:#454550">User</div><div class="cell" style="left:453px;width:237px;line-height:47.5px;color:#d6d6d6;border-left-color:#454550">User</div><div class="cell" style="left:690px;width:141px;line-height:47.5px;color:#d6d6d6;border-left-color:#454550">add</div><div class="cell" style="left:831px;width:237px;line-height:47.5px;color:#d6d6d6;border-left-color:#454550">2025-10-10 17:13:33</div><div class="cell" style="left:1068px;width:237px;line-height:47.5px;color:#d6d6d6;border-left-color:#454550">172.16.81.168</div><div class="cell" style="left:1305px;width:854px;line-height:47.5px;color:#d6d6d6;border-left-color:#454550;border-right:1px solid #454550;padding-right:20px">add userId:10, username:novastar, roleId:10 success</div></div>
<div class="row" style="top:807.5px;height:48.5px;background:#24242e;border-top-color:#454550"><div class="cell" style="left:0px;width:72px;line-height:47.5px;color:#d6d6d6;border-left-color:#454550">17</div><div class="cell" style="left:72px;width:240px;line-height:47.5px;color:#d6d6d6;border-left-color:#454550">admin</div><div class="cell" style="left:312px;width:141px;line-height:47.5px;color:#d6d6d6;border-left-color:#454550">Role</div><div class="cell" style="left:453px;width:237px;line-height:47.5px;color:#d6d6d6;border-left-color:#454550">Role</div><div class="cell" style="left:690px;width:141px;line-height:47.5px;color:#d6d6d6;border-left-color:#454550">edit</div><div class="cell" style="left:831px;width:237px;line-height:47.5px;color:#d6d6d6;border-left-color:#454550">2025-10-10 17:14:48</div><div class="cell" style="left:1068px;width:237px;line-height:47.5px;color:#d6d6d6;border-left-color:#454550">172.16.81.168</div><div class="cell" style="left:1305px;width:854px;line-height:47.5px;color:#d6d6d6;border-left-color:#454550;border-right:1px solid #454550;padding-right:20px">Update roleId: 10, before:{&#x27;id&#x27;: 10, &#x27;name&#x27;: &#x27;子账号&#x27;, &#x27;parent_id&#x27;: 1, &#x27;sort&#x27;: 10, &#x27;active&#x27;: 1, &#x27;role_type&#x27;: 3},funcs:[]</div></div>
<div class="row" style="top:855.0px;height:48.5px;background:#24242e;border-top-color:#454550"><div class="cell" style="left:0px;width:72px;line-height:47.5px;color:#d6d6d6;border-left-color:#454550">18</div><div class="cell" style="left:72px;width:240px;line-height:47.5px;color:#d6d6d6;border-left-color:#454550">admin</div><div class="cell" style="left:312px;width:141px;line-height:47.5px;color:#d6d6d6;border-left-color:#454550">User</div><div class="cell" style="left:453px;width:237px;line-height:47.5px;color:#d6d6d6;border-left-color:#454550">User</div><div class="cell" style="left:690px;width:141px;line-height:47.5px;color:#d6d6d6;border-left-color:#454550">delete</div><div class="cell" style="left:831px;width:237px;line-height:47.5px;color:#d6d6d6;border-left-color:#454550">2025-10-10 17:19:52</div><div class="cell" style="left:1068px;width:237px;line-height:47.5px;color:#d6d6d6;border-left-color:#454550">172.16.81.168</div><div class="cell" style="left:1305px;width:854px;line-height:47.5px;color:#d6d6d6;border-left-color:#454550;border-right:1px solid #454550;padding-right:20px">delete userId:10, username: success</div></div>
<div class="row" style="top:902.5px;height:48.5px;background:#24242e;border-top-color:#454550"><div class="cell" style="left:0px;width:72px;line-height:47.5px;color:#d6d6d6;border-left-color:#454550">19</div><div class="cell" style="left:72px;width:240px;line-height:47.5px;color:#d6d6d6;border-left-color:#454550">admin</div><div class="cell" style="left:312px;width:141px;line-height:47.5px;color:#d6d6d6;border-left-color:#454550">User</div><div class="cell" style="left:453px;width:237px;line-height:47.5px;color:#d6d6d6;border-left-color:#454550">User</div><div class="cell" style="left:690px;width:141px;line-height:47.5px;color:#d6d6d6;border-left-color:#454550">add</div><div class="cell" style="left:831px;width:237px;line-height:47.5px;color:#d6d6d6;border-left-color:#454550">2025-10-10 17:20:08</div><div class="cell" style="left:1068px;width:237px;line-height:47.5px;color:#d6d6d6;border-left-color:#454550">172.16.81.168</div><div class="cell" style="left:1305px;width:854px;line-height:47.5px;color:#d6d6d6;border-left-color:#454550;border-right:1px solid #454550;padding-right:20px">add userId:11, username:novastar, roleId:10 success</div></div>
<div class="row" style="top:950.0px;height:48.5px;background:#24242e;border-top-color:#454550"><div class="cell" style="left:0px;width:72px;line-height:47.5px;color:#d6d6d6;border-left-color:#454550">20</div><div class="cell" style="left:72px;width:240px;line-height:47.5px;color:#d6d6d6;border-left-color:#454550">novastar</div><div class="cell" style="left:312px;width:141px;line-height:47.5px;color:#d6d6d6;border-left-color:#454550">Device Card</div><div class="cell" style="left:453px;width:237px;line-height:47.5px;color:#d6d6d6;border-left-color:#454550">Slot_Function</div><div class="cell" style="left:690px;width:141px;line-height:47.5px;color:#d6d6d6;border-left-color:#454550">edit</div><div class="cell" style="left:831px;width:237px;line-height:47.5px;color:#d6d6d6;border-left-color:#454550">2025-10-11 11:22:38</div><div class="cell" style="left:1068px;width:237px;line-height:47.5px;color:#d6d6d6;border-left-color:#454550">172.16.81.168</div><div class="cell" style="left:1305px;width:854px;line-height:47.5px;color:#d6d6d6;border-left-color:#454550;border-right:1px solid #454550;padding-right:20px">{&#x27;slotId&#x27;: 5, &#x27;functions&#x27;: [{&#x27;id&#x27;: 0, &#x27;functionType&#x27;: 3}], &#x27;deviceId&#x27;: 0}</div></div>
<div class="row" style="top:997.5px;height:48.5px;background:#24242e;border-top-color:#454550"><div class="cell" style="left:0px;width:72px;line-height:47.5px;color:#d6d6d6;border-left-color:#454550">21</div><div class="cell" style="left:72px;width:240px;line-height:47.5px;color:#d6d6d6;border-left-color:#454550">novastar</div><div class="cell" style="left:312px;width:141px;line-height:47.5px;color:#d6d6d6;border-left-color:#454550">Device Card</div><div class="cell" style="left:453px;width:237px;line-height:47.5px;color:#d6d6d6;border-left-color:#454550">Slot_Function</div><div class="cell" style="left:690px;width:141px;line-height:47.5px;color:#d6d6d6;border-left-color:#454550">edit</div><div class="cell" style="left:831px;width:237px;line-height:47.5px;color:#d6d6d6;border-left-color:#454550">2025-10-11 11:22:40</div><div class="cell" style="left:1068px;width:237px;line-height:47.5px;color:#d6d6d6;border-left-color:#454550">172.16.81.168</div><div class="cell" style="left:1305px;width:854px;line-height:47.5px;color:#d6d6d6;border-left-color:#454550;border-right:1px solid #454550;padding-right:20px">{&#x27;slotId&#x27;: 5, &#x27;functions&#x27;: [{&#x27;id&#x27;: 0, &#x27;functionType&#x27;: 3}], &#x27;deviceId&#x27;: 0}</div></div>
</div>
<div class="abs" style="left:2549px;top:93px;width:11px;height:1254px;background:#1b1b23"></div>
<div class="abs" style="left:2549px;top:93px;width:11px;height:1152px;background:#504f5a;border-radius:6px"></div>
<div class="abs" style="left:0;top:1347px;width:2560px;height:1px;background:#45403a"></div>
</body></html>
